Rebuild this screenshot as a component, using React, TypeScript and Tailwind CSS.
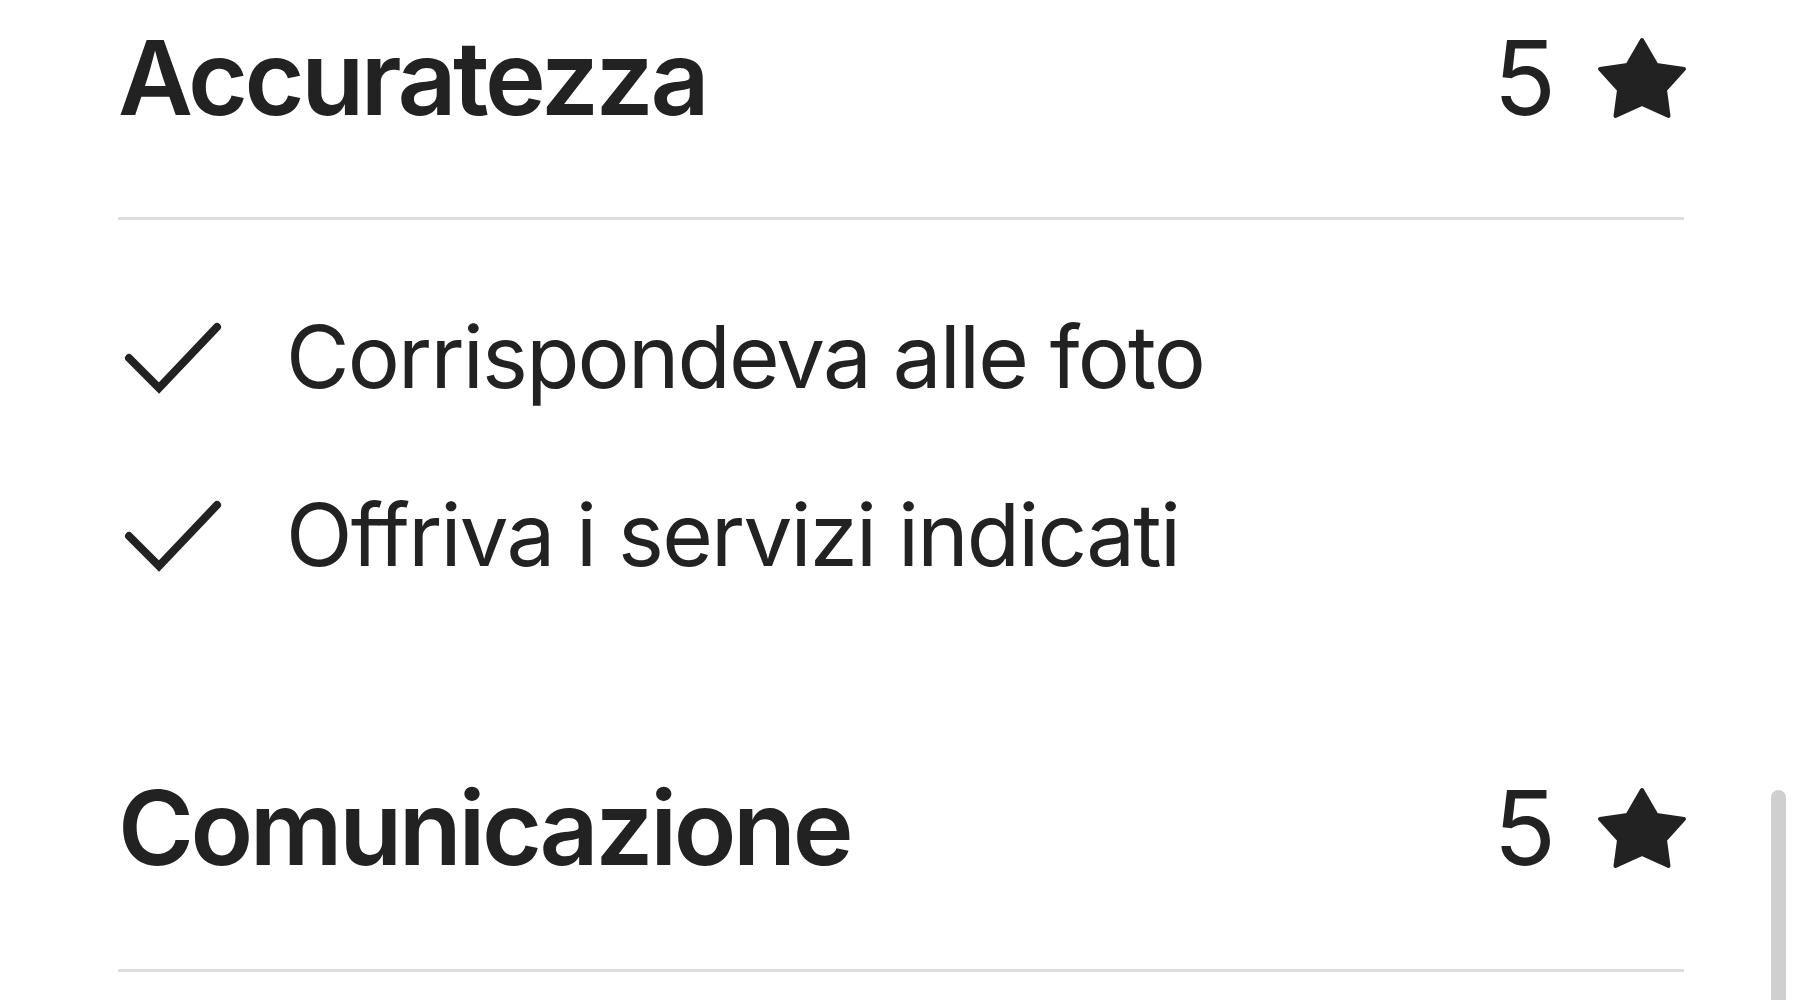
import React from "react";

type Item = { label: string };

const font = { fontFamily: "Inter, 'Noto Sans', sans-serif" };

function Star() {
  return (
    <svg viewBox="0 0 92 84" className="-mr-[4px] w-[92px] h-[84px]" aria-hidden>
      <path
        d="M46 4L60.5 29 88 33 69 54 72.5 80 46 68 19.5 80 23 54 4 33 31.5 29Z"
        fill="#222222"
        stroke="#222222"
        strokeWidth="4"
        strokeLinejoin="round"
      />
    </svg>
  );
}

function Check() {
  return (
    <svg viewBox="0 0 100 80" className="w-[100px] h-[80px] shrink-0" aria-hidden>
      <polyline
        points="7,42 37,72 95,11"
        fill="none"
        stroke="#222222"
        strokeWidth="8"
        strokeLinecap="round"
      />
    </svg>
  );
}

function Header({ title, score }: { title: string; score: number }) {
  return (
    <div className="flex h-[155px] items-center justify-between">
      <span className="text-[103px] font-semibold leading-none tracking-[-3.4px] text-[#222222]">
        {title}
      </span>
      <div className="flex items-center gap-[40px]">
        <span className="text-[103px] font-normal leading-none text-[#222222]">
          {score}
        </span>
        <Star />
      </div>
    </div>
  );
}

export default function App() {
  const items: Item[] = [
    { label: "Corrispondeva alle foto" },
    { label: "Offriva i servizi indicati" },
  ];

  return (
    <div className="relative h-[1000px] w-[1800px] overflow-hidden bg-white" style={font}>
      <div className="flex flex-col pl-[118px] pr-[116px]">
        <Header title="Accuratezza" score={5} />
        <div className="mt-[62px] h-[3px] bg-[#dddddd]" />
        <div className="mt-[86px] flex flex-col gap-[78px]">
          {items.map((it) => (
            <div key={it.label} className="flex h-[100px] items-center">
              <div className="ml-[4px]">
                <Check />
              </div>
              <span className="ml-[64px] text-[87px] font-normal leading-none tracking-[-1.8px] text-[#222222]">
                {it.label}
              </span>
            </div>
          ))}
        </div>
        <div className="mt-[166px]">
          <Header title="Comunicazione" score={5} />
        </div>
        <div className="mt-[64px] h-[3px] bg-[#dddddd]" />
      </div>
      <div className="absolute left-[1771px] top-[790px] h-[260px] w-[15px] rounded-full bg-[#cfcfcf]" />
    </div>
  );
}
